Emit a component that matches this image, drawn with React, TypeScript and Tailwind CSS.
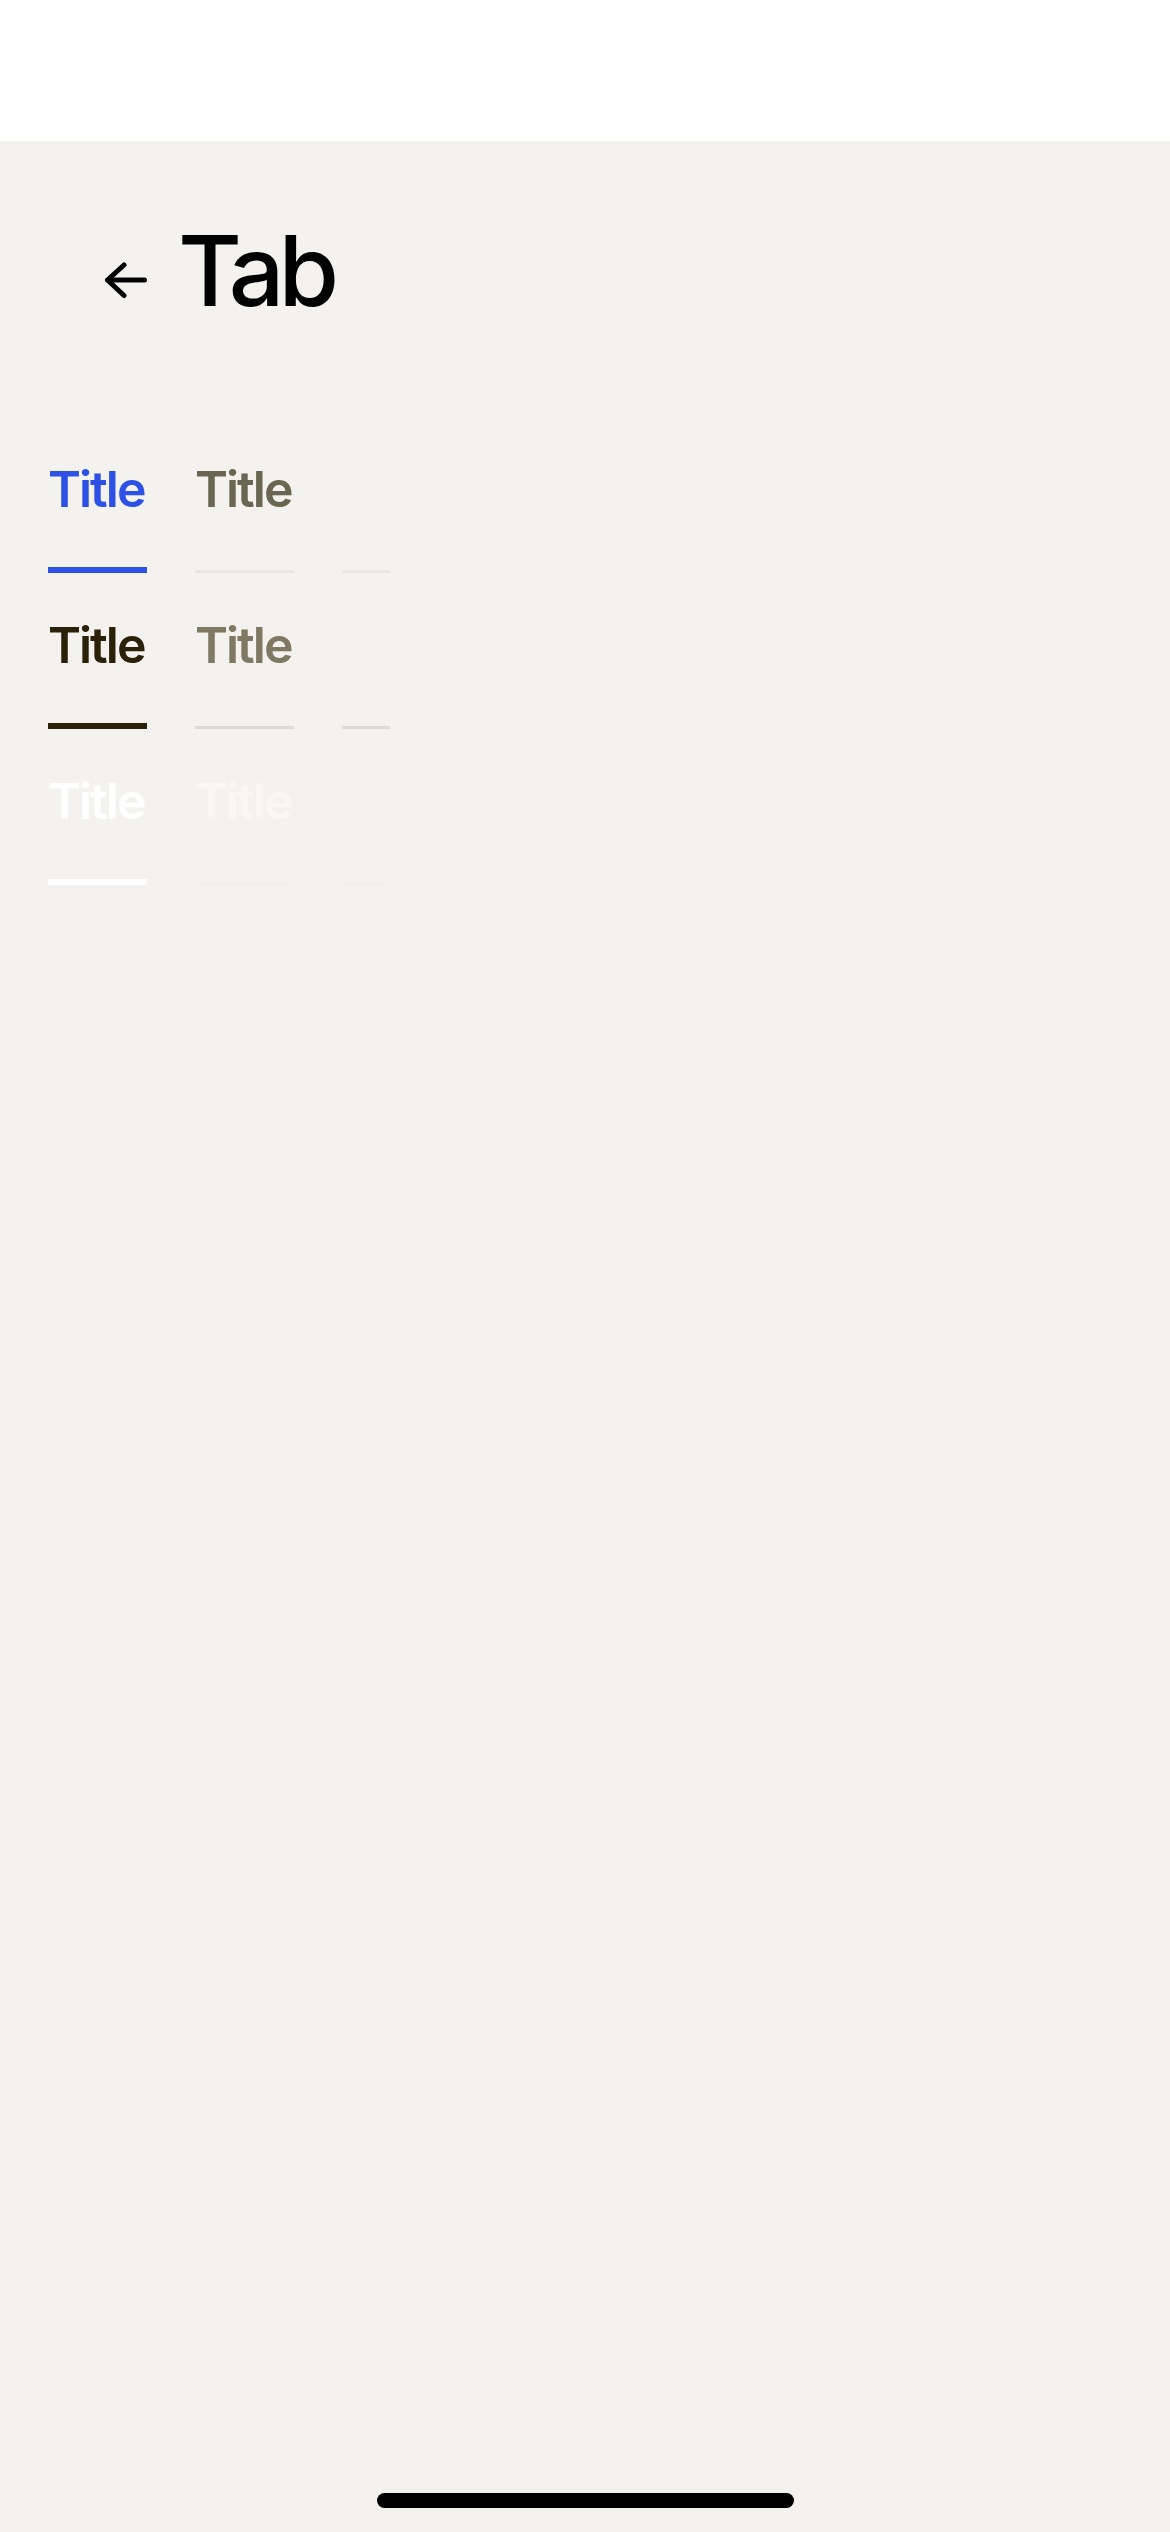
import React from 'react';

type Variant = {
  active: string;
  activeLine: string;
  inactive: string;
  line: string;
};

const variants: Variant[] = [
  { active: 'text-[#2d50e6]', activeLine: 'bg-[#2d50e6]', inactive: 'text-[#6b6652]', line: 'bg-[#e8e6e1]' },
  { active: 'text-[#2b2108]', activeLine: 'bg-[#2b2108]', inactive: 'text-[#7f7862]', line: 'bg-[#dcdad2]' },
  { active: 'text-white', activeLine: 'bg-white', inactive: 'text-[#f8f7f5]', line: 'bg-[#f1f0ec]' },
];

const TabRow: React.FC<{ v: Variant }> = ({ v }) => {
  return (
    <div className="flex gap-[48px] px-[48px] pt-[47px] h-[156px]">
      {/* active tab */}
      <div className="flex flex-col w-[99px]">
        <span className={`text-[50px] leading-none font-semibold tracking-[-2px] ${v.active}`}>Title</span>
        <div className="h-[59px] flex items-end">
          <div className={`h-[6px] w-full ${v.activeLine}`} />
        </div>
      </div>
      {/* inactive tab */}
      <div className="flex flex-col w-[99px]">
        <span className={`text-[50px] leading-none font-semibold tracking-[-2px] ${v.inactive}`}>Title</span>
        <div className="h-[59px] flex items-end">
          <div className={`h-[3px] w-full ${v.line}`} />
        </div>
      </div>
      {/* empty tab */}
      <div className="flex flex-col w-[48px]">
        <span className="h-[50px]" />
        <div className="h-[59px] flex items-end">
          <div className={`h-[3px] w-full ${v.line}`} />
        </div>
      </div>
    </div>
  );
};

export default function App() {
  return (
    <div
      className="w-[1170px] h-[2532px] flex flex-col bg-[#f3f2ee]"
      style={{ fontFamily: 'Inter, "Liberation Sans", sans-serif' }}
    >
      {/* status bar */}
      <div className="h-[141px] bg-white shrink-0" />

      {/* header */}
      <div className="flex items-start pl-[105px] pt-[81px] gap-[31px]">
        <svg className="mt-[40px]" width="42" height="37" viewBox="0 0 42 37" fill="none">
          <path d="M2.5 18H39.5M19 3L2.5 18L19 33.5" stroke="#000" strokeWidth="5" strokeLinecap="round" strokeLinejoin="round" />
        </svg>
        <h1 className="text-[98px] leading-none font-medium text-black tracking-[-6px]">Tab</h1>
      </div>

      {/* tab variants */}
      <div className="flex flex-col mt-[97px]">
        {variants.map((v, i) => (
          <TabRow key={i} v={v} />
        ))}
      </div>

      <div className="flex-1" />

      {/* home indicator */}
      <div className="flex justify-center pb-[24px]">
        <div className="w-[417px] h-[15px] rounded-full bg-black" />
      </div>
    </div>
  );
}
